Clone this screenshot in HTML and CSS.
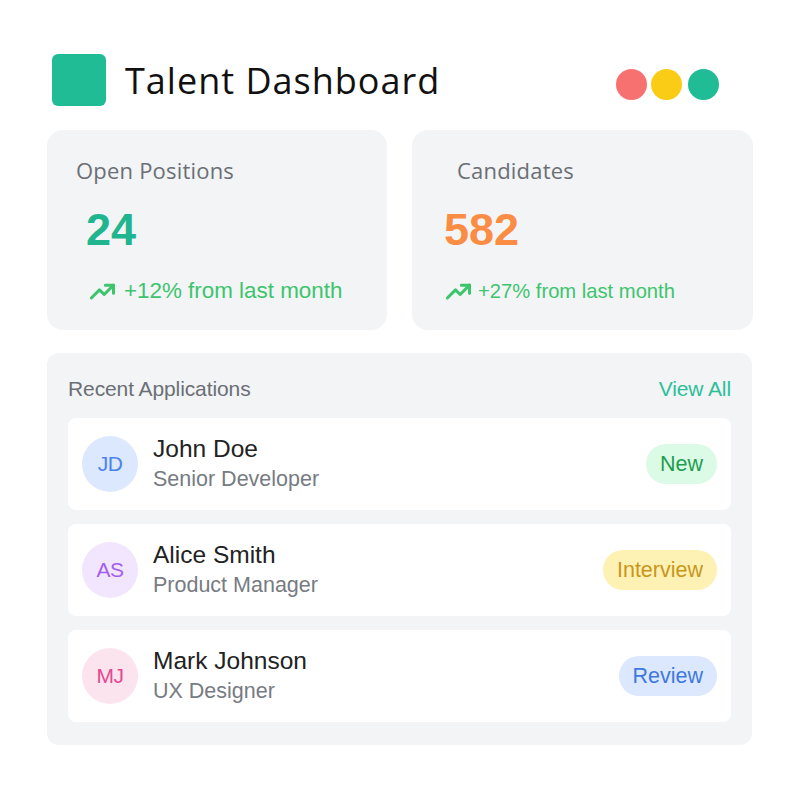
FILE: index.html
```html
<!DOCTYPE html>
<html lang="en">
<head>
<meta charset="utf-8">
<title>Talent Dashboard</title>
<link rel="stylesheet" href="styles.css">
</head>
<body>
<div class="page">
  <header class="header">
    <div class="brand">
      <div class="logo"></div>
      <h1 class="title">Talent Dashboard</h1>
    </div>
    <div class="dots">
      <span class="dot dot-red"></span>
      <span class="dot dot-yellow"></span>
      <span class="dot dot-teal"></span>
    </div>
  </header>

  <section class="stats">
    <div class="card card-open">
      <div class="card-label">Open Positions</div>
      <div class="card-value value-teal">24</div>
      <div class="trend">
        <svg class="trend-icon" viewBox="0 0 24 24" fill="none" stroke="currentColor" stroke-width="2.6" stroke-linecap="round" stroke-linejoin="round"><polyline points="2,18 9,11 13,15 21,7"/><polyline points="14,7 21,7 21,14"/></svg>
        <span>+12% from last month</span>
      </div>
    </div>
    <div class="card card-cand">
      <div class="card-label">Candidates</div>
      <div class="card-value value-orange">582</div>
      <div class="trend">
        <svg class="trend-icon" viewBox="0 0 24 24" fill="none" stroke="currentColor" stroke-width="2.6" stroke-linecap="round" stroke-linejoin="round"><polyline points="2,18 9,11 13,15 21,7"/><polyline points="14,7 21,7 21,14"/></svg>
        <span>+27% from last month</span>
      </div>
    </div>
  </section>

  <section class="panel">
    <div class="panel-head">
      <span class="panel-title">Recent Applications</span>
      <a class="view-all">View All</a>
    </div>
    <div class="rows">
      <div class="row">
        <div class="avatar av-blue">JD</div>
        <div class="person">
          <div class="name">John Doe</div>
          <div class="role">Senior Developer</div>
        </div>
        <span class="badge badge-green">New</span>
      </div>
      <div class="row">
        <div class="avatar av-purple">AS</div>
        <div class="person">
          <div class="name">Alice Smith</div>
          <div class="role">Product Manager</div>
        </div>
        <span class="badge badge-yellow">Interview</span>
      </div>
      <div class="row">
        <div class="avatar av-pink">MJ</div>
        <div class="person">
          <div class="name">Mark Johnson</div>
          <div class="role">UX Designer</div>
        </div>
        <span class="badge badge-blue">Review</span>
      </div>
    </div>
  </section>
</div>
</body>
</html>
```

FILE: styles.css
```css
* { box-sizing: border-box; }
html, body { margin: 0; padding: 0; background: #ffffff; }
body { font-family: "Liberation Sans", Arial, sans-serif; color: #222; }

.page {
  width: 800px;
  padding: 54px 47px 0 47px;
}

.header {
  display: flex;
  align-items: center;
  justify-content: space-between;
  padding: 0 34px 0 5px;
  height: 52px;
}
.brand { display: flex; align-items: center; gap: 19px; }
.logo {
  width: 54px; height: 52px;
  background: #1fbc96;
  border-radius: 6px;
}
.title {
  margin: 0;
  font-family: "Open Sans", "Noto Sans", sans-serif;
  font-weight: 400;
  font-size: 36px;
  letter-spacing: 1px;
  color: #111;
}
.dots { display: flex; gap: 4px; margin-top: 8px; }
.dot { width: 31px; height: 31px; border-radius: 50%; display: block; }
.dot-red { background: #f87171; }
.dot-yellow { background: #facc15; margin-right: 2px; }
.dot-teal { background: #1fbc96; }

.stats {
  display: grid;
  grid-template-columns: 340px 341px;
  gap: 25px;
  margin-top: 24px;
}
.card {
  background: #f2f4f6;
  border-radius: 16px;
  height: 200px;
  padding-top: 26px;
}
.card-label {
  font-family: "Open Sans", "Noto Sans", sans-serif;
  font-size: 22px;
  letter-spacing: 0.2px;
  color: #6b6f75;
  line-height: 28px;
}
.card-value {
  font-weight: 700;
  font-size: 45px;
  line-height: 52px;
  margin-top: 20px;
}
.value-teal { color: #1fb58f; }
.value-orange { color: #fb8c44; }
.trend {
  display: flex;
  align-items: center;
  color: #3ec46d;
  margin-top: 21px;
}
.trend-icon { width: 28px; height: 28px; }

.card-open .card-label { padding-left: 29px; }
.card-open .card-value { padding-left: 39px; }
.card-open .trend { padding-left: 42px; font-size: 22.4px; gap: 7px; }
.card-cand .card-label { padding-left: 45px; }
.card-cand .card-value { padding-left: 32px; }
.card-cand .trend { padding-left: 33px; font-size: 20.2px; gap: 5px; }

.panel {
  margin-top: 23px;
  width: 705px;
  background: #f2f4f6;
  border-radius: 12px;
  padding: 19px 21px 23px 21px;
}
.panel-head {
  display: flex;
  justify-content: space-between;
  align-items: center;
  height: 34px;
  margin-bottom: 12px;
}
.panel-title { font-size: 21px; color: #6b6f75; letter-spacing: -0.1px; }
.view-all { font-size: 21px; color: #2dbf9a; letter-spacing: -0.1px; }

.rows { display: flex; flex-direction: column; gap: 14px; }
.row {
  background: #fff;
  border-radius: 8px;
  height: 92px;
  display: flex;
  align-items: center;
  padding: 0 14px;
}
.avatar {
  width: 56px; height: 56px;
  border-radius: 50%;
  display: flex; align-items: center; justify-content: center;
  font-size: 21px;
  letter-spacing: -0.5px;
  flex: none;
}
.av-blue { background: #dbe8fd; color: #4b83ec; }
.av-purple { background: #f1e6fd; color: #a45ef0; }
.av-pink { background: #fce4ef; color: #e6488f; }

.person { margin-left: 15px; flex: 1; }
.name { font-size: 24.5px; color: #222; line-height: 31px; }
.role { font-size: 21.5px; color: #777b82; line-height: 31px; }

.badge {
  height: 40px;
  border-radius: 20px;
  padding: 0 14px;
  display: flex; align-items: center;
  font-size: 21.5px;
}
.badge-green { background: #dcfbe6; color: #1e9e4f; }
.badge-yellow { background: #fdf2b4; color: #c9961c; }
.badge-blue { background: #dce8fd; color: #3f78e0; }
```
